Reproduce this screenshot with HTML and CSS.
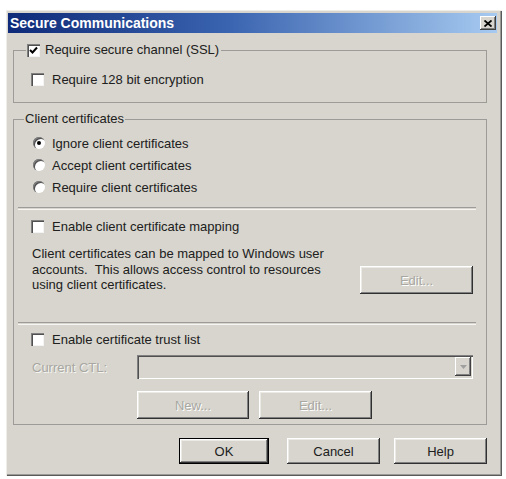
FILE: index.html
```html
<!DOCTYPE html>
<html lang="en">
<head>
  <meta charset="UTF-8">
  <meta name="viewport" content="width=device-width, initial-scale=1.0">
  <title>Secure Communications</title>
  <link rel="stylesheet" href="styles.css">
</head>
<body>
  <div class="dialog">
    <div class="titlebar">
      <span class="title">Secure Communications</span>
      <span class="close-btn">
        <svg width="8" height="7" viewBox="0 0 8 7"><path d="M0.5 0.5 L7.5 6.5 M7.5 0.5 L0.5 6.5" stroke="#000" stroke-width="1.8" fill="none"/></svg>
      </span>
    </div>

    <div class="dialog-body">
      <fieldset class="group group-ssl">
        <legend class="legend-check">
          <span class="check">
            <svg width="11" height="11" viewBox="0 0 11 11"><path d="M2 5 L4.5 7.5 L9 2.5" stroke="#000" stroke-width="2" fill="none"/></svg>
          </span>
          <span>Require secure channel (SSL)</span>
        </legend>
        <div class="option option-128">
          <span class="check"></span>
          <span class="option-label">Require 128 bit encryption</span>
        </div>
      </fieldset>

      <fieldset class="group group-client">
        <legend class="legend-text">Client certificates</legend>

        <div class="radios">
          <div class="option">
            <span class="radio selected"></span>
            <span class="radio-label">Ignore client certificates</span>
          </div>
          <div class="option">
            <span class="radio"></span>
            <span class="radio-label">Accept client certificates</span>
          </div>
          <div class="option">
            <span class="radio"></span>
            <span class="radio-label">Require client certificates</span>
          </div>
        </div>

        <div class="separator sep-first"></div>

        <div class="option option-mapping">
          <span class="check"></span>
          <span class="option-label">Enable client certificate mapping</span>
        </div>

        <div class="mapping-row">
          <p class="mapping-text">Client certificates can be mapped to Windows user<br>accounts.&nbsp; This allows access control to resources<br>using client certificates.</p>
          <button class="btn btn-mapping-edit" disabled>Edit...</button>
        </div>

        <div class="separator sep-second"></div>

        <div class="option option-trust">
          <span class="check"></span>
          <span class="option-label">Enable certificate trust list</span>
        </div>

        <div class="ctl-row">
          <span class="ctl-label">Current CTL:</span>
          <div class="combo">
            <span class="combo-arrow">
              <svg width="7" height="4" viewBox="0 0 7 4"><path d="M0 0 H7 L3.5 4 Z" fill="#a0a0a0"/></svg>
            </span>
          </div>
        </div>

        <div class="ctl-buttons">
          <button class="btn btn-new" disabled>New...</button>
          <button class="btn btn-ctl-edit" disabled>Edit...</button>
        </div>
      </fieldset>

      <div class="dialog-buttons">
        <button class="btn btn-ok">OK</button>
        <button class="btn btn-cancel">Cancel</button>
        <button class="btn btn-help">Help</button>
      </div>
    </div>
  </div>
</body>
</html>
```

FILE: styles.css
```css
body {
  margin: 0;
  background-color: #ffffff;
  font-family: "Liberation Sans", Arial, sans-serif;
  font-size: 13px;
  color: #202020;
}

.dialog {
  box-sizing: border-box;
  width: 496px;
  height: 466px;
  margin: 10px 0 0 6px;
  padding: 3px 5px 0 2px;
  background-color: #d7d5cd;
  box-shadow:
    inset 1px 1px 0 #eeede8,
    inset -1px -1px 0 #5a5a5a,
    inset -2px -2px 0 #9a9a96;
}

.titlebar {
  height: 20px;
  display: flex;
  align-items: center;
  justify-content: space-between;
  background: linear-gradient(to right, #0e2a78, #3a64b0 45%, #a6caf0);
}

.title {
  padding-left: 2px;
  font-size: 14px;
  font-weight: bold;
  color: #ffffff;
  line-height: 20px;
}

.close-btn {
  width: 16px;
  height: 14px;
  margin-right: 1px;
  display: flex;
  align-items: center;
  justify-content: center;
  background-color: #d7d5cd;
  box-shadow:
    inset -1px -1px 0 #404040,
    inset 1px 1px 0 #ffffff,
    inset -2px -2px 0 #808080;
}

.dialog-body {
  padding: 0 10px 0 5px;
}

/* group boxes */
.group {
  margin: 0;
  padding: 0;
  border: 1px solid #9c9b97;
  min-inline-size: 0;
}

.group-ssl {
  margin-top: 10px;
  padding-bottom: 15px;
}

.group-client {
  margin-top: 9px;
  padding-bottom: 5px;
}

.legend-check {
  margin-left: 12px;
  padding: 0 2px 0 1px;
  height: 14px;
  display: flex;
  align-items: center;
  gap: 5px;
  line-height: 14px;
}

.legend-text {
  margin-left: 10px;
  padding: 0 1px;
  line-height: 14px;
}

/* checkboxes and radios */
.option {
  height: 16px;
  display: flex;
  align-items: center;
}

.option-128 {
  margin: 14px 0 0 17px;
}

.option-mapping {
  margin: 8px 0 0 17px;
}

.option-trust {
  margin: 6px 0 0 17px;
}

.check {
  box-sizing: border-box;
  width: 13px;
  height: 13px;
  display: flex;
  align-items: center;
  justify-content: center;
  background-color: #ffffff;
  box-shadow:
    inset 1px 1px 0 #808080,
    inset 2px 2px 0 #505050,
    inset -1px -1px 0 #f4f4f4;
}

.option-label {
  margin-left: 8px;
}

.radios {
  margin-top: 9px;
  display: flex;
  flex-direction: column;
  gap: 6px;
}

.radios .option {
  margin-left: 19px;
}

.radio {
  position: relative;
  width: 12px;
  height: 12px;
  border-radius: 50%;
  background-color: #ffffff;
  box-shadow:
    inset 1px 1px 0 #808080,
    inset 2px 2px 0 #505050;
}

.radio.selected::after {
  content: '';
  position: absolute;
  top: 4px;
  left: 4px;
  width: 4px;
  height: 4px;
  border-radius: 50%;
  background-color: #000000;
}

.radio-label {
  margin-left: 7px;
}

.separator {
  height: 1px;
  margin: 0 10px 0 4px;
  border-top: 1px solid #9c9b97;
  border-bottom: 1px solid #f6f5f2;
}

.sep-first {
  margin-top: 12px;
}

.sep-second {
  margin-top: 28px;
}

/* certificate mapping */
.mapping-row {
  margin: 12px 13px 0 18px;
  display: flex;
  align-items: flex-start;
  justify-content: space-between;
}

.mapping-text {
  margin: 0;
  line-height: 15.5px;
}

/* trust list */
.ctl-row {
  margin: 8px 13px 0 18px;
  display: flex;
  align-items: center;
}

.ctl-label {
  width: 105px;
  color: #a8a7a2;
  text-shadow: 1px 1px 0 #f6f5f2;
}

.combo {
  box-sizing: border-box;
  flex: 1;
  height: 24px;
  padding: 2px;
  display: flex;
  justify-content: flex-end;
  background-color: #d7d5cd;
  box-shadow:
    inset 1px 1px 0 #808080,
    inset 2px 2px 0 #505050,
    inset -1px -1px 0 #ffffff;
}

.combo-arrow {
  width: 16px;
  height: 19px;
  display: flex;
  align-items: center;
  justify-content: center;
  box-shadow:
    inset -1px -1px 0 #404040,
    inset 1px 1px 0 #ffffff,
    inset -2px -2px 0 #808080;
}

.ctl-buttons {
  margin: 12px 0 0 123px;
  display: flex;
  gap: 10px;
}

/* buttons */
.btn {
  box-sizing: border-box;
  padding: 0;
  border: none;
  font-family: "Liberation Sans", Arial, sans-serif;
  font-size: 13px;
  color: #202020;
  background-color: #d7d5cd;
  box-shadow:
    inset -1px -1px 0 #303030,
    inset 1px 1px 0 #ffffff,
    inset -2px -2px 0 #808080,
    inset 2px 2px 0 #ebeae5;
}

.btn:disabled {
  color: #a8a7a2;
  text-shadow: 1px 1px 0 #ffffff;
}

.btn-mapping-edit {
  width: 113px;
  height: 28px;
  margin-top: 20px;
}

.btn-new {
  width: 112px;
  height: 28px;
}

.btn-ctl-edit {
  width: 113px;
  height: 28px;
}

.dialog-buttons {
  margin-top: 13px;
  display: flex;
  justify-content: flex-end;
}

.dialog-buttons .btn {
  height: 26px;
}

.btn-ok {
  width: 90px;
  border: 1px solid #000000;
}

.btn-cancel {
  width: 93px;
  margin-left: 18px;
}

.btn-help {
  width: 93px;
  margin-left: 14px;
}
```
